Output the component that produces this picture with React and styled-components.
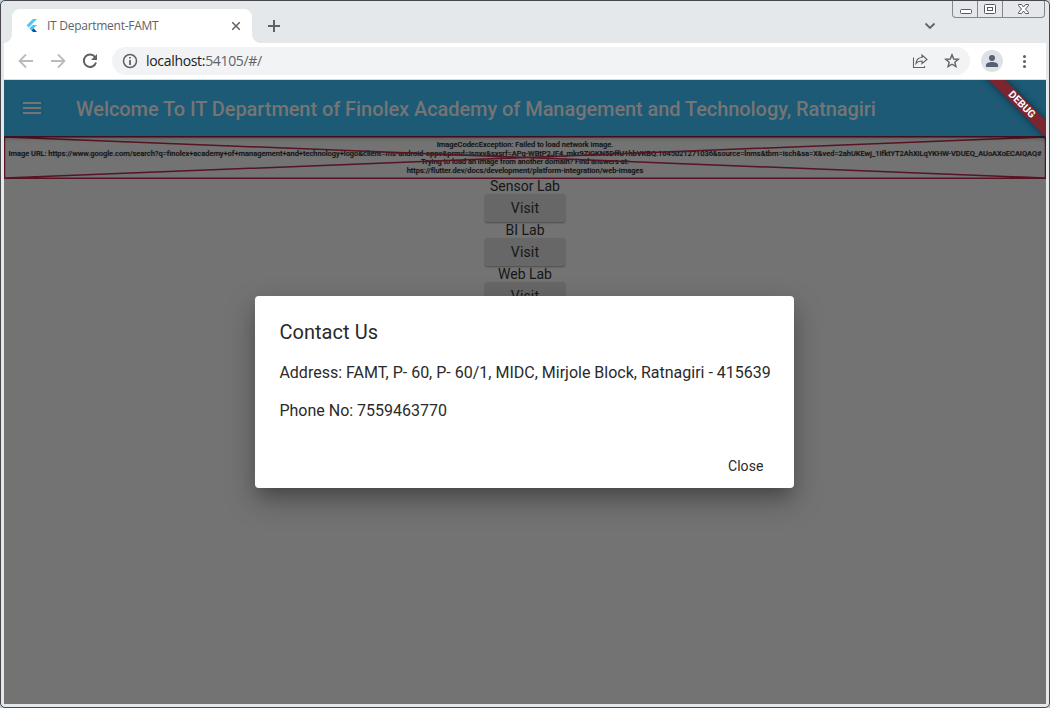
import React from 'react';
import styled, { createGlobalStyle } from 'styled-components';

const GlobalStyle = createGlobalStyle`
  *, *::before, *::after { box-sizing: border-box; }
  body { margin: 0; background: #b9cbdd; overflow: hidden; }
  button { font: inherit; color: inherit; border: 0; padding: 0; background: none; }
  svg { display: block; }
`;

const uiFont = `'Open Sans', 'Noto Sans', sans-serif`;

const Window = styled.div`
  position: relative;
  width: 1050px;
  height: 708px;
  padding: 0 3px 3px;
  border: 1px solid #48484c;
  border-radius: 5px;
  background: #e5e8eb;
  display: flex;
  flex-direction: column;
  overflow: hidden;
`;

const TabStrip = styled.header`
  height: 42px;
  flex: none;
  display: flex;
  align-items: flex-end;
  font-family: ${uiFont};
`;

const Tab = styled.div`
  position: relative;
  width: 240px;
  height: 34px;
  margin-left: 8px;
  padding: 0 10px 0 13px;
  border-radius: 8px 8px 0 0;
  background: #fff;
  display: flex;
  align-items: center;
  color: #5f6368;
  &::before, &::after {
    content: '';
    position: absolute;
    bottom: 0;
    width: 8px;
    height: 8px;
  }
  &::before { left: -8px; background: radial-gradient(circle at 0 0, transparent 7.5px, #fff 8px); }
  &::after { right: -8px; background: radial-gradient(circle at 100% 0, transparent 7.5px, #fff 8px); }
`;

const TabTitle = styled.span`
  flex: 1;
  margin: -1px 0 0 9px;
  font-size: 12px;
  letter-spacing: -0.27px;
  white-space: nowrap;
`;

const StripButton = styled.button`
  width: ${p => p.$width}px;
  height: 34px;
  margin-left: ${p => p.$left || 0};
  margin-right: ${p => p.$right || 0};
  display: grid;
  place-items: center;
`;

const Caption = styled.div`
  position: absolute;
  top: 0;
  right: 4px;
  display: flex;
  height: 17px;
  border: 1px solid #84888d;
  border-top: 0;
  border-radius: 0 0 4px 4px;
`;

const CaptionButton = styled.button`
  width: ${p => p.$width}px;
  padding-bottom: 1px;
  display: grid;
  place-items: center;
  & + & { border-left: 1px solid #84888d; }
`;

const Toolbar = styled.nav`
  height: 37px;
  flex: none;
  display: flex;
  align-items: center;
  padding: 0 14px;
  background: #fff;
  border-bottom: 1px solid #dadce0;
`;

const NavButton = styled.button`
  width: 16px;
  height: 16px;
  margin-right: 16px;
`;

const AddressBar = styled.div`
  flex: 1;
  height: 28px;
  margin-right: 11px;
  margin-left: -2px;
  padding: 0 10px;
  border-radius: 14px;
  background: #f1f3f4;
  display: flex;
  align-items: center;
  gap: 16px;
`;

const Url = styled.span`
  flex: 1;
  margin-left: -8px;
  font: 14px/20px ${uiFont};
  letter-spacing: -0.32px;
  color: #5f6368;
  b { font-weight: 400; color: #202124; }
`;

const Avatar = styled.div`
  width: 22px;
  height: 22px;
  margin-right: 13px;
  border-radius: 50%;
  background: #dee1e6;
  display: grid;
  place-items: center;
`;

const Page = styled.main`
  position: relative;
  flex: 1;
  min-height: 0;
  overflow: hidden;
  background: #737373;
  font-family: Roboto, sans-serif;
`;

const AppBar = styled.div`
  position: relative;
  z-index: 1;
  height: 56px;
  padding: 0 16px;
  display: flex;
  align-items: center;
  gap: 32px;
  background: #1d5a75;
  box-shadow: 0 2px 4px rgba(0, 0, 0, 0.3);
`;

const AppTitle = styled.h1`
  margin: 0;
  padding-top: 2px;
  font-size: 20px;
  font-weight: 500;
  letter-spacing: -0.07px;
  color: #757575;
  white-space: nowrap;
`;

const Labs = styled.section`
  display: flex;
  flex-direction: column;
  align-items: center;
  color: #161616;
  font-size: 14px;
`;

const ImageError = styled.div`
  position: relative;
  width: 100%;
  height: 43px;
  padding-top: 5px;
  color: #141414;
  font-size: 7.5px;
  line-height: 8.6px;
  font-weight: 500;
  white-space: nowrap;
  text-shadow: 0 0 1px rgba(0, 0, 0, 0.35);
`;

const ErrorLine = styled.div`
  display: flex;
  justify-content: center;
  letter-spacing: ${p => p.$spacing || '-0.02px'};
`;

const Cross = styled.svg`
  position: absolute;
  inset: 0;
`;

const LabName = styled.div`
  height: 15px;
  line-height: 14px;
`;

const VisitButton = styled.button`
  width: 80px;
  height: 28px;
  margin-bottom: 1px;
  border-radius: 2px;
  background: #676767;
  box-shadow: 0 1px 2px rgba(0, 0, 0, 0.35);
  letter-spacing: 0.15px;
`;

const Dialog = styled.div`
  position: absolute;
  z-index: 2;
  left: 251.4px;
  top: 216px;
  width: 539px;
  height: 192px;
  padding: 24px 24px 8px;
  border-radius: 4px;
  background: #fff;
  box-shadow: 0 11px 15px -7px rgba(0, 0, 0, 0.22), 0 12px 28px 2px rgba(0, 0, 0, 0.26);
  display: flex;
  flex-direction: column;
  color: #2a2a2a;
`;

const DialogTitle = styled.h2`
  margin: 0 0 17px;
  font-size: 20px;
  line-height: 24px;
  font-weight: 400;
  letter-spacing: 0.05px;
`;

const DialogText = styled.p`
  margin: 0 0 15px;
  font-size: 16px;
  line-height: 23px;
  white-space: nowrap;
`;

const CloseButton = styled.button`
  margin: auto -8px 0 0;
  align-self: flex-end;
  padding: 0 15px;
  height: 28px;
  font-size: 14px;
  letter-spacing: 0.05px;
`;

const Ribbon = styled.div`
  position: absolute;
  z-index: 3;
  top: 17.5px;
  right: -31px;
  width: 112px;
  height: 12px;
  transform: rotate(45deg);
  background: #7b2531;
  box-shadow: 0 0 6px rgba(0, 0, 0, 0.5);
  color: #fff;
  font-size: 10.4px;
  font-weight: 700;
  line-height: 12px;
  text-align: center;
  text-indent: 2px;
`;

const FlutterLogo = () => (
  <svg width="13" height="14" viewBox="1 1 14 15">
    <path fill="#54c5f8" d="M9.5 1H14L5 10 2.7 7.7z" />
    <path fill="#40c4ff" d="M9.5 7.3H14L10.3 11 8 13.300 5.600 11z" />
    <path fill="#01579b" d="M8 13.300 10.300 11 14 15H9.700z" />
  </svg>
);

const Line = ({ size = 16, color = '#5f6368', width = 1.8, d }) => (
  <svg width={size} height={size} viewBox="0 0 16 16" fill="none" stroke={color} strokeWidth={width}>
    <path d={d} />
  </svg>
);

const labs = ['Sensor Lab', 'BI Lab', 'Web Lab'];

const failedUrl =
  'Image URL: https://www.google.com/search?q=finolex+academy+of+management+and+technology+logo&client=ms-android-oppo&prmd=isnxv&sxsrf=APq-WBtP2JF4_mkr9ZiGKN5DffU1hbVKBQ:1645021271036&source=lnms&tbm=isch&sa=X&ved=2ahUKEwj_1IfktYT2AhXiLqYKHW-VDUEQ_AUoAXoECAIQAQ#';

export default function App() {
  return (
    <>
      <GlobalStyle />
      <Window>
        <TabStrip>
          <Tab>
            <FlutterLogo />
            <TabTitle>IT Department-FAMT</TabTitle>
            <Line size={12} width={2} d="M3 3 13 13M13 3 3 13" />
          </Tab>
          <StripButton $width={28} $left="8px"><Line width={2} d="M8 2V14M2 8H14" /></StripButton>
          <StripButton $width={28} $left="auto" $right="102px">
            <Line width={1.8} d="M3.500 5.500 8 10 12.500 5.500" />
          </StripButton>
        </TabStrip>
        <Caption>
          <CaptionButton $width={24}>
            <svg width="13" height="15"><rect x="1.500" y="8.500" width="11" height="4" rx="1" fill="#fff" stroke="#55585e" /></svg>
          </CaptionButton>
          <CaptionButton $width={25}>
            <svg width="13" height="15" fill="#fff" stroke="#55585e"><rect x="0.500" y="3.500" width="11" height="9" rx="1" /><rect x="3.500" y="6.500" width="5" height="3" /></svg>
          </CaptionButton>
          <CaptionButton $width={42}>
            <svg width="13" height="15" fill="#fff" stroke="#55585e"><path d="M1.500 3.500H4.500L6.500 6 8.500 3.500H11.500V4.500L8.500 8 11.500 11.500V12.500H8.500L6.500 10 4.500 12.500H1.500V11.500L4.500 8 1.500 4.500Z" /></svg>
          </CaptionButton>
        </Caption>
        <Toolbar>
          <NavButton><Line color="#b9bbbe" d="M15 8H2M8 1.500 1.500 8 8 14.500" /></NavButton>
          <NavButton><Line color="#b9bbbe" d="M1 8H14M8 1.500 14.500 8 8 14.500" /></NavButton>
          <NavButton>
            <svg width="16" height="16" viewBox="0 0 16 16">
              <path d="M13 4A6.200 6.200 0 1 0 14 9.500" fill="none" stroke="#5f6368" strokeWidth="2" />
              <path d="M15 1V7H9Z" fill="#5f6368" />
            </svg>
          </NavButton>
          <AddressBar>
            <svg width="16" height="16" fill="none" stroke="#5f6368" strokeWidth="1.500">
              <circle cx="8" cy="8" r="6.500" /><path d="M8 7V12M8 4V5.600" strokeWidth="1.800" />
            </svg>
            <Url><b>localhost:</b>54105/#/</Url>
            <Line width={1.1} d="M1.500 4.500V14.500H12.500V13M4 10.500C4.500 6.500 7 4.500 10 4.500V2L15 6.500 10 10.500V8C7.500 8 5.500 8.500 4 10.500Z" />
            <Line width={1.4} d="M8 1.800 9.700 6 14.300 6.300 10.800 9.200 11.900 13.600 8 11.200 4.100 13.600 5.200 9.200 1.700 6.300 6.300 6Z" />
          </AddressBar>
          <Avatar>
            <svg width="14" height="14" fill="#566074"><circle cx="7" cy="4" r="3" /><path d="M1 13V11C1 9 4 8 7 8S13 9 13 11V13Z" /></svg>
          </Avatar>
          <svg width="16" height="16" fill="#5f6368"><circle cx="8.500" cy="3.500" r="1.500" /><circle cx="8.500" cy="8.500" r="1.500" /><circle cx="8.500" cy="13.500" r="1.500" /></svg>
        </Toolbar>
        <Page>
          <AppBar>
            <svg width="24" height="24" fill="#757575"><path d="M3 6H21V8H3zM3 11H21V13H3zM3 16H21V18H3z" /></svg>
            <AppTitle>Welcome To IT Department of Finolex Academy of Management and Technology, Ratnagiri</AppTitle>
          </AppBar>
          <Labs>
            <ImageError>
              <ErrorLine>ImageCodecException: Failed to load network image.</ErrorLine>
              <ErrorLine $spacing="-0.043px">{failedUrl}</ErrorLine>
              <ErrorLine $spacing="-0.06px">Trying to load an image from another domain? Find answers at:</ErrorLine>
              <ErrorLine>https://flutter.dev/docs/development/platform-integration/web-images</ErrorLine>
              <Cross width="1042" height="43" fill="none" stroke="#561424" strokeWidth="1.500">
                <path d="M0.500 0.800H1041.500V42.200H0.500ZM1 1 1041 42M1041 1 1 42" />
              </Cross>
            </ImageError>
            {labs.map(name => (
              <React.Fragment key={name}>
                <LabName>{name}</LabName>
                <VisitButton>Visit</VisitButton>
              </React.Fragment>
            ))}
          </Labs>
          <Dialog>
            <DialogTitle>Contact Us</DialogTitle>
            <DialogText>Address: FAMT, P- 60, P- 60/1, MIDC, Mirjole Block, Ratnagiri - 415639</DialogText>
            <DialogText>Phone No: 7559463770</DialogText>
            <CloseButton>Close</CloseButton>
          </Dialog>
          <Ribbon>DEBUG</Ribbon>
        </Page>
      </Window>
    </>
  );
}
